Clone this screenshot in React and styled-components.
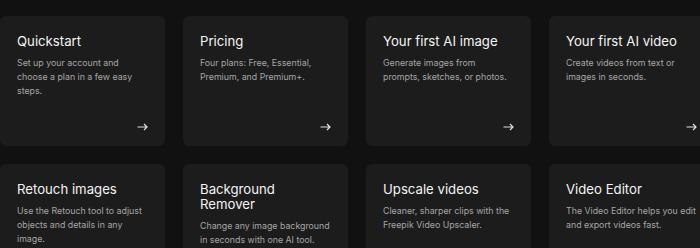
import React from 'react'
import styled, { createGlobalStyle } from 'styled-components'

const cards = [
  { title: 'Quickstart', text: 'Set up your account and choose a plan in a few easy steps.' },
  { title: 'Pricing', text: 'Four plans: Free, Essential, Premium, and Premium+.' },
  { title: 'Your first AI image', text: 'Generate images from prompts, sketches, or photos.' },
  { title: 'Your first AI video', text: 'Create videos from text or images in seconds.' },
  { title: 'Retouch images', text: 'Use the Retouch tool to adjust objects and details in any image.' },
  { title: 'Background Remover', text: 'Change any image background in seconds with one AI tool.' },
  { title: 'Upscale videos', text: 'Cleaner, sharper clips with the Freepik Video Upscaler.' },
  { title: 'Video Editor', text: 'The Video Editor helps you edit and export videos fast.' },
]

const Global = createGlobalStyle`
  body {
    margin: 0;
    background: #111111;
    overflow: hidden;
    font-family: Inter, "Noto Sans", sans-serif;
  }
`

const Grid = styled.section`
  display: grid;
  grid-template-columns: repeat(4, 165px);
  grid-auto-rows: 130px;
  gap: 18px;
  padding-top: 16px;
  width: 714px;
`

const Card = styled.a`
  display: flex;
  flex-direction: column;
  background: #1c1c1c;
  border-radius: 6px;
  padding: 17.5px 17px 15px;
  text-decoration: none;
  box-sizing: border-box;
`

const Title = styled.h3`
  margin: 0;
  font-size: 13.2px;
  line-height: 15px;
  font-weight: 400;
  color: #f4f4f4;
  padding-right: 12px;
`

const Text = styled.p`
  margin: 7px 0 0;
  font-size: 8.8px;
  line-height: 14px;
  color: #a6a6a6;
`

const Arrow = styled.span`
  margin-top: auto;
  align-self: flex-end;
  display: flex;
  color: #e0e0e0;
`

const ArrowIcon = () => (
  <svg width="11" height="8" viewBox="0 0 11 8" fill="none" stroke="currentColor" strokeWidth="1.2">
    <path d="M0.5 4h9.5M7 1l3 3-3 3" />
  </svg>
)

const App = () => {
  return (
    <>
      <Global />
      <Grid>
        {cards.map(c => (
          <Card key={c.title} href="#">
            <Title>{c.title}</Title>
            <Text>{c.text}</Text>
            <Arrow><ArrowIcon /></Arrow>
          </Card>
        ))}
      </Grid>
    </>
  )
}

export default App
